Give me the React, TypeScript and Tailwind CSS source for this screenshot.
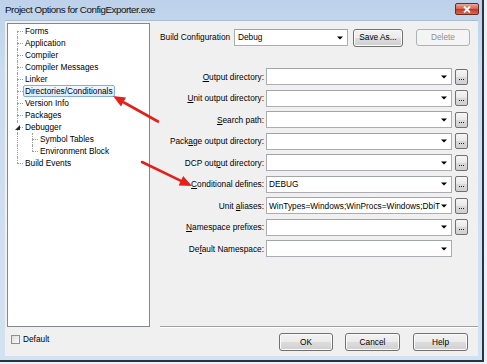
import React from 'react';

type TreeRow = {
  label: string;
  level: 1 | 2;
  top: boolean;
  bottom: boolean;
  selected?: boolean;
  expander?: boolean;
};

const treeRows: TreeRow[] = [
  { label: 'Forms', level: 1, top: false, bottom: true },
  { label: 'Application', level: 1, top: true, bottom: true },
  { label: 'Compiler', level: 1, top: true, bottom: true },
  { label: 'Compiler Messages', level: 1, top: true, bottom: true },
  { label: 'Linker', level: 1, top: true, bottom: true },
  { label: 'Directories/Conditionals', level: 1, top: true, bottom: true, selected: true },
  { label: 'Version Info', level: 1, top: true, bottom: true },
  { label: 'Packages', level: 1, top: true, bottom: true },
  { label: 'Debugger', level: 1, top: true, bottom: true, expander: true },
  { label: 'Symbol Tables', level: 2, top: true, bottom: true },
  { label: 'Environment Block', level: 2, top: true, bottom: false },
  { label: 'Build Events', level: 1, top: true, bottom: false },
];

// label parts: [before, underlined, after]
const fields: { parts: [string, string, string]; value?: string; browse: boolean }[] = [
  { parts: ['', 'O', 'utput directory:'], browse: true },
  { parts: ['', 'U', 'nit output directory:'], browse: true },
  { parts: ['', 'S', 'earch path:'], browse: true },
  { parts: ['Pack', 'a', 'ge output directory:'], browse: true },
  { parts: ['DCP out', 'p', 'ut directory:'], browse: true },
  { parts: ['', 'C', 'onditional defines:'], value: 'DEBUG', browse: true },
  { parts: ['Unit ', 'a', 'liases:'], value: 'WinTypes=Windows;WinProcs=Windows;DbiT', browse: true },
  { parts: ['', 'N', 'amespace prefixes:'], browse: true },
  { parts: ['De', 'f', 'ault Namespace:'], browse: false },
];

const btn =
  'h-[18px] flex items-center justify-center rounded-[3px] border border-[#707070] bg-[linear-gradient(#f2f2f2,#ebebeb_50%,#dddddd_50%,#cfcfcf)] text-black shadow-[inset_0_0_0_1px_#fcfcfc]';

function Branch({ top, bottom }: { top: boolean; bottom: boolean }) {
  return (
    <div className="relative w-[6px] h-full shrink-0">
      {top && <div className="absolute left-0 top-0 h-[6px] border-l border-dotted border-[#a0a0a0]" />}
      {bottom && <div className="absolute left-0 top-[6px] h-[6px] border-l border-dotted border-[#a0a0a0]" />}
      <div className="absolute left-0 top-[6px] w-full border-t border-dotted border-[#a0a0a0]" />
    </div>
  );
}

function Arrow() {
  return (
    <svg width="6" height="4" viewBox="0 0 6 4" className="shrink-0">
      <path d="M0 0.5 H6 L3 3.5 Z" fill="#000" />
    </svg>
  );
}

function Combo({ value, className }: { value?: string; className: string }) {
  return (
    <div
      className={`h-[17px] flex items-center bg-white border border-[#abadb3] border-t-[#a0a4ab] pl-[2px] pr-[4px] ${className}`}
    >
      <span className="flex-1 whitespace-nowrap">{value}</span>
      <Arrow />
    </div>
  );
}

export default function App() {
  return (
    <div className="relative w-[487px] h-[364px] overflow-hidden bg-[#eef1f4] font-['Liberation_Sans',Arial,sans-serif] text-[8.3px] text-black leading-none">
      <div className="w-[484px] h-[362px] flex flex-col bg-[linear-gradient(#bdd2ea,#cbdcee_20%,#d3e2f1)] border-r-2 border-b-2 border-[#263443]">
        {/* title bar */}
        <div className="h-[20px] shrink-0 flex items-start justify-between pl-[5px] pr-[3px]">
          <span className="mt-[5px] text-[9.8px] tracking-[-0.45px] text-[#111]">
            Project Options for ConfigExporter.exe
          </span>
          <div className="mt-[3px] w-[24px] h-[12px] rounded-[2px] border border-[#6b2a24] bg-[linear-gradient(#e9a99b,#d4604c_50%,#c2341f_50%,#d66a4f)] flex items-center justify-center">
            <svg width="8" height="7" viewBox="0 0 8 7">
              <path d="M1 0.5 L7 6.5 M7 0.5 L1 6.5" stroke="#fff" strokeWidth="1.8" />
            </svg>
          </div>
        </div>

        {/* client area */}
        <div className="flex-1 ml-[5px] mr-[4px] mb-[4px] bg-[#f0f0f0] border-t border-[#a9bcd1] flex">
          {/* left column */}
          <div className="w-[145px] shrink-0 pl-[2px] pt-[2px] flex flex-col">
            <div className="w-[143px] h-[304px] bg-white border border-[#828790] pt-[1px]">
              {treeRows.map((r) => (
                <div key={r.label} className="h-[12px] flex items-stretch">
                  <div className="w-[9px] shrink-0" />
                  {r.level === 2 && (
                    <div className="w-[15px] shrink-0 border-l border-dotted border-[#a0a0a0]" />
                  )}
                  <div className="relative flex">
                    <Branch top={r.top} bottom={r.bottom} />
                    {r.expander && (
                      <div className="absolute left-[-3px] top-[3px] w-[6px] h-[6px] bg-white flex items-center justify-center">
                        <svg width="5" height="5" viewBox="0 0 5 5">
                          <path d="M5 0 V5 H0 Z" fill="#262626" />
                        </svg>
                      </div>
                    )}
                  </div>
                  <span
                    className={`flex items-center border pl-[1px] pr-[1px] rounded-[2px] whitespace-nowrap ${
                      r.selected
                        ? 'border-[#84acdd] bg-[linear-gradient(#f1f7fe,#dcebfc)]'
                        : 'border-transparent'
                    }`}
                  >
                    {r.label}
                  </span>
                </div>
              ))}
            </div>
            <div className="mt-[8px] ml-[4px] flex items-center gap-[3px]">
              <div className="w-[9px] h-[9px] border border-[#8e8f8f] bg-[linear-gradient(135deg,#dcdcdc,#fbfbfb)]" />
              <span>Default</span>
            </div>
          </div>

          {/* right column */}
          <div className="flex-1 flex flex-col pl-[10px]">
            <div className="mt-[8px] h-[17px] flex items-center pr-[8px]">
              <span className="w-[74px] shrink-0">Build Configuration</span>
              <Combo value="Debug" className="w-[114px] shrink-0 pl-[3px]" />
              <div className={`${btn} ml-[5px] w-[50px] h-[17px]`}>Save As...</div>
              <div className="ml-[13px] w-[54px] h-[17px] flex items-center justify-center rounded-[3px] border border-[#adb2b5] bg-[#f4f4f4] text-[#8f8f8f]">
                Delete
              </div>
            </div>

            <div className="mt-[20px] flex flex-col">
              {fields.map((f) => (
                <div key={f.parts.join('')} className="h-[21.5px] flex items-center">
                  <span className="w-[104px] shrink-0 text-right whitespace-nowrap">
                    {f.parts[0]}
                    <span className="underline underline-offset-1">{f.parts[1]}</span>
                    {f.parts[2]}
                  </span>
                  <Combo value={f.value} className="ml-[2px] w-[186px] shrink-0" />
                  {f.browse && (
                    <div className="ml-[3px] w-[13px] h-[16px] rounded-[2px] border border-[#707070] bg-[linear-gradient(#f6f6f6,#e8e8e8_50%,#dadada_50%,#d0d0d0)] flex items-end justify-center gap-[1px] pb-[4px]">
                      <span className="w-[1px] h-[1px] bg-[#222]" />
                      <span className="w-[1px] h-[1px] bg-[#222]" />
                      <span className="w-[1px] h-[1px] bg-[#222]" />
                    </div>
                  )}
                </div>
              ))}
            </div>

            <div className="mt-auto border-t border-[#a0a0a0] border-b border-b-white" />
            <div className="mt-[5px] mb-[5px] h-[18px] flex items-center justify-end gap-[12px] pr-[10px]">
              <div className={`${btn} w-[54px] border-[#3c7fb1] bg-[linear-gradient(#eaf6fd,#d9f0fc_50%,#bee6fd_50%,#a7d9f5)]`}>OK</div>
              <div className={`${btn} w-[55px]`}>Cancel</div>
              <div className={`${btn} w-[55px] ml-[1px]`}>Help</div>
            </div>
          </div>
        </div>
      </div>

      {/* annotation arrows */}
      <svg className="absolute inset-0 pointer-events-none" width="487" height="364" viewBox="0 0 487 364">
        <path d="M158 121.5 L124 102.5" stroke="#e3211c" strokeWidth="2.6" strokeLinecap="round" />
        <polygon points="113,96 126,97.6 121,106.4" fill="#e3211c" />
        <path d="M142 162 L181 180.8" stroke="#e3211c" strokeWidth="2.6" strokeLinecap="round" />
        <polygon points="192,186 178.6,185.6 183.2,176" fill="#e3211c" />
      </svg>
    </div>
  );
}
